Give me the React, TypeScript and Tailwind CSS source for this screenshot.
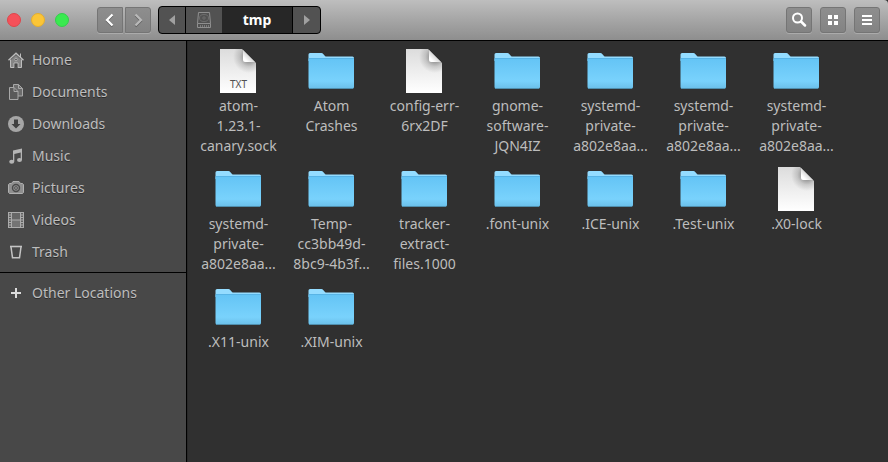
import React from "react";

type IconProps = { className?: string };

const gray = "#bdbdbd";

function HomeIcon() {
  return (
    <svg width="16" height="16" viewBox="0 0 16 16" fill="none">
      <path d="M2.500 8v7.500h11V8L8 3z" fill="#858585" />
      <path d="M.500 8.200 8 1.200l7.500 7" stroke={gray} strokeWidth="1.400" />
      <path d="M2.500 7.500v8h3.500v-4.500h4v4.500h3.500v-8M12.500 5V1.500" stroke={gray} />
      <path d="M6.500 11.500h3v4h-3z" fill="#484848" />
      <circle cx="8" cy="7.500" r="1.300" stroke={gray} strokeWidth=".8" fill="#555" />
    </svg>
  );
}

function DocumentsIcon() {
  return (
    <svg width="16" height="16" viewBox="0 0 16 16" fill="#6c6c6c" stroke="#a8a8a8">
      <path d="M5.500 3V.500h5l4 4v7.500h-5" />
      <path d="M10.500.500v4h4" fill="none" />
      <path d="M1.500 3.500h4.500l4 4v8H1.500z" fill="#5a5a5a" />
      <path d="M6 3.500v4h4" fill="none" />
    </svg>
  );
}

function DownloadsIcon() {
  return (
    <svg width="16" height="16" viewBox="0 0 16 16">
      <circle cx="8" cy="8" r="8" fill="#a6a6a6" />
      <path d="M6 3.500h4V8h2.500L8 12.500 3.500 8H6z" fill="#404040" />
    </svg>
  );
}

function MusicIcon() {
  return (
    <svg width="16" height="16" viewBox="0 0 16 16" fill="#b4b4b4">
      <path d="M5 2.500 14 .500V12h-1.300V4.500L6.300 6v7.500H5z" />
      <ellipse cx="3.700" cy="13.700" rx="2.500" ry="2" />
      <ellipse cx="11.500" cy="12" rx="2.500" ry="2" />
    </svg>
  );
}

function PicturesIcon() {
  return (
    <svg width="16" height="16" viewBox="0 0 16 16" stroke="#b0b0b0">
      <path d="M1.500 3.500h2L5 1.500h6l1.500 2h2l1 1v8l-1 1h-13l-1-1v-8z" fill="#8e8e8e" />
      <circle cx="8" cy="8" r="3.500" fill="#8e8e8e" stroke="#4a4a4a" strokeWidth="1.400" />
      <circle cx="8" cy="8" r="1.500" fill="#8e8e8e" stroke="#5a5a5a" />
    </svg>
  );
}

function VideosIcon() {
  return (
    <svg width="16" height="16" viewBox="0 0 16 16">
      <path d="M0 0h16v16H0z" fill="#ababab" />
      <path d="M4 1h8v6.500H4z" fill="#666" />
      <path d="M4 8.500h8V15H4z" fill="#747474" />
      <path d="M2 1v14M14 1v14" stroke="#4b4b4b" strokeWidth="1.500" strokeDasharray="1.500 1" />
    </svg>
  );
}

function TrashIcon() {
  return (
    <svg width="16" height="16" viewBox="0 0 16 16" fill="none" stroke="#c4c4c4">
      <path d="M2 2.500h12" strokeWidth="1.600" />
      <path d="M3 3 4.500 13.700h7L13 3" strokeWidth="1.500" />
    </svg>
  );
}

function PlusIcon() {
  return (
    <svg width="16" height="16" viewBox="0 0 16 16" stroke="#dcdcdc" strokeWidth="2">
      <path d="M3 8h10M8 3v10" />
    </svg>
  );
}

function DiskIcon() {
  return (
    <svg width="16" height="16" viewBox="0 0 16 16" fill="none" stroke="#8f8f8f">
      <path d="M2.500.500h11l1 11v4h-13v-4z" />
      <path d="M1.500 11.500h13" />
      <ellipse cx="8" cy="6" rx="4.500" ry="3.500" stroke="#6e6e6e" />
      <circle cx="8" cy="6" r="1.200" stroke="#6e6e6e" />
      <path d="M4.500 13v2M6.500 13v2M8.500 13v2M10.500 13v2M12.500 13v2" stroke="#7c7c7c" />
    </svg>
  );
}

function Chevron({ right = false }: { right?: boolean }) {
  return (
    <svg width="16" height="16" viewBox="0 0 16 16" fill="none" stroke="currentColor" strokeWidth="2.200" className="drop-shadow-[0_1px_0_rgba(0,0,0,0.3)]">
      <path d={right ? "M5.500 2.500 11 8l-5.500 5.500" : "M10.500 2.500 5 8l5.500 5.500"} />
    </svg>
  );
}

function Triangle({ right = false }: { right?: boolean }) {
  return (
    <svg width="6" height="10" viewBox="0 0 6 10" fill="#a0a0a0">
      <path d={right ? "M0 0v10l6-5z" : "M6 0v10L0 5z"} />
    </svg>
  );
}

function SearchIcon() {
  return (
    <svg width="16" height="16" viewBox="0 0 16 16" fill="none" stroke="#fff">
      <circle cx="6.500" cy="6" r="4.500" strokeWidth="2" />
      <path d="m10 9.500 4 4" strokeWidth="2.500" strokeLinecap="round" />
    </svg>
  );
}

function GridIcon() {
  return (
    <svg width="16" height="16" viewBox="0 0 16 16" fill="#fff">
      <path d="M3 3h4v4H3zM9 3h4v4H9zM3 9h4v4H3zM9 9h4v4H9z" />
    </svg>
  );
}

function MenuIcon() {
  return (
    <svg width="16" height="16" viewBox="0 0 16 16" fill="#fff">
      <path d="M3 3h10v2H3zM3 7h10v2H3zM3 11h10v2H3z" />
    </svg>
  );
}

function FolderIcon() {
  return (
    <svg width="47" height="48" viewBox="0 0 47 48">
      <defs>
        <linearGradient id="folder" x1="0" y1="0" x2="0" y2="1">
          <stop offset="0" stopColor="#64c4f5" />
          <stop offset=".75" stopColor="#79d2fc" />
          <stop offset="1" stopColor="#6bc0ea" />
        </linearGradient>
      </defs>
      <path d="M.500 8V6.500Q.500 5 2 5h11.500q1 0 1.500.700l2 2.300q.500.500 1.500.500h26q1.500 0 1.500 1.500V13H.500z" fill="#94dcff" />
      <path d="M.500 10.500h45.500V39q0 1.500-1.500 1.500H2Q.500 40.500.500 39z" fill="url(#folder)" />
      <path d="M1 10.500h45" stroke="#58b4e6" />
      <path d="M1 40.500h44" stroke="#4f8fae" />
    </svg>
  );
}

function FileIcon({ kind }: { kind: string }) {
  return (
    <span className="relative block">
      <svg width="47" height="48" viewBox="0 0 47 48">
        <defs>
          <linearGradient id="paper" x1="0" y1="0" x2="0" y2="1">
            <stop offset="0" stopColor="#dcdcdc" />
            <stop offset="1" stopColor="#fff" />
          </linearGradient>
          <linearGradient id="fold" x1="0" y1="1" x2="1" y2="0">
            <stop offset=".2" stopColor="#fff" />
            <stop offset=".5" stopColor="#d8d8d8" />
          </linearGradient>
          <radialGradient id="shade" cx="34" cy="9" r="16" gradientUnits="userSpaceOnUse">
            <stop offset=".2" stopColor="#000" stopOpacity=".4" />
            <stop offset=".6" stopColor="#000" stopOpacity=".14" />
            <stop offset="1" stopColor="#000" stopOpacity="0" />
          </radialGradient>
        </defs>
        <path d="M5 1h22l14 14v30H5z" fill="url(#paper)" />
        <path d="M5 1h22l14 14v30H5z" fill="url(#shade)" />
        <path d="M28 2v10q0 2 2 2h10z" fill="url(#fold)" />
      </svg>
      {kind === "txt" && (
        <span className="absolute inset-x-0 bottom-1 text-center text-[10px] leading-4 text-[#505050]">TXT</span>
      )}
    </span>
  );
}

const places: { name: string; Icon: React.ComponentType<IconProps> }[] = [
  { name: "Home", Icon: HomeIcon },
  { name: "Documents", Icon: DocumentsIcon },
  { name: "Downloads", Icon: DownloadsIcon },
  { name: "Music", Icon: MusicIcon },
  { name: "Pictures", Icon: PicturesIcon },
  { name: "Videos", Icon: VideosIcon },
  { name: "Trash", Icon: TrashIcon },
];

const systemd = ["systemd-", "private-", "a802e8aa..."];

const entries: { kind: string; lines: string[] }[] = [
  { kind: "txt", lines: ["atom-", "1.23.1-", "canary.sock"] },
  { kind: "folder", lines: ["Atom", "Crashes"] },
  { kind: "file", lines: ["config-err-", "6rx2DF"] },
  { kind: "folder", lines: ["gnome-", "software-", "JQN4IZ"] },
  { kind: "folder", lines: systemd },
  { kind: "folder", lines: systemd },
  { kind: "folder", lines: systemd },
  { kind: "folder", lines: systemd },
  { kind: "folder", lines: ["Temp-", "cc3bb49d-", "8bc9-4b3f..."] },
  { kind: "folder", lines: ["tracker-", "extract-", "files.1000"] },
  { kind: "folder", lines: [".font-unix"] },
  { kind: "folder", lines: [".ICE-unix"] },
  { kind: "folder", lines: [".Test-unix"] },
  { kind: "file", lines: [".X0-lock"] },
  { kind: "folder", lines: [".X11-unix"] },
  { kind: "folder", lines: [".XIM-unix"] },
];

function ToolButton({ label, className = "rounded-[3px]", children }: { label: string; className?: string; children: React.ReactNode }) {
  return (
    <button
      type="button"
      aria-label={label}
      className={`flex size-[26px] items-center justify-center border border-[#757575] bg-linear-to-b from-[#8e8e8e] to-[#838383] shadow-[0_1px_0_rgba(255,255,255,0.2)] ${className}`}
    >
      {children}
    </button>
  );
}

function PlaceRow({ name, Icon }: { name: string; Icon: React.ComponentType<IconProps> }) {
  return (
    <li>
      <button type="button" className="flex h-8 w-full items-center gap-2 px-2 text-left [text-shadow:0_1px_0_rgba(0,0,0,0.4)]">
        <Icon />
        {name}
      </button>
    </li>
  );
}

export default function App() {
  return (
    <div className="flex min-h-screen flex-col bg-[#303030] font-['Noto_Sans',sans-serif] text-[14px] leading-5 text-[#bdbdbd]">
      <header className="flex h-[41px] items-center justify-between rounded-tr-[4px] border-b border-black bg-linear-to-b from-[#bebebe] to-[#8e8e8e] px-2">
        <div className="flex items-center">
          <div className="-ml-px flex gap-[10px]">
            <button type="button" aria-label="Close" className="size-[14px] rounded-full border border-[#e0454a] bg-[#f5515a]" />
            <button type="button" aria-label="Minimize" className="size-[14px] rounded-full border border-[#e5ae2e] bg-[#fbc537]" />
            <button type="button" aria-label="Maximize" className="size-[14px] rounded-full border border-[#32d04a] bg-[#3aea50]" />
          </div>
          <div className="ml-7 flex gap-[2px]">
            <ToolButton label="Back" className="rounded-l-[3px] text-white">
              <Chevron />
            </ToolButton>
            <ToolButton label="Forward" className="rounded-r-[3px] text-[#b9b9b9]">
              <Chevron right />
            </ToolButton>
          </div>
          <nav aria-label="Path" className="ml-[7px] flex h-7 overflow-hidden rounded-[4px] border border-black bg-[#525252]">
            <button type="button" aria-label="Scroll path left" className="flex w-[27px] items-center justify-center border-r border-black">
              <Triangle />
            </button>
            <button type="button" aria-label="File system" className="flex w-9 items-center justify-center">
              <DiskIcon />
            </button>
            <button type="button" aria-current="page" className="w-[70px] bg-[#272727] text-center font-bold text-white">
              tmp
            </button>
            <button type="button" aria-label="Scroll path right" className="flex w-7 items-center justify-center border-l border-black">
              <Triangle right />
            </button>
          </nav>
        </div>
        <div className="flex gap-2">
          <ToolButton label="Search"><SearchIcon /></ToolButton>
          <ToolButton label="View"><GridIcon /></ToolButton>
          <ToolButton label="Menu"><MenuIcon /></ToolButton>
        </div>
      </header>
      <div className="flex flex-1">
        <aside className="w-[187px] shrink-0 border-r border-black bg-[#484848]">
          <ul className="border-b border-black pt-[3px] pb-1">
            {places.map((p) => (
              <PlaceRow key={p.name} name={p.name} Icon={p.Icon} />
            ))}
          </ul>
          <ul className="pt-1">
            <PlaceRow name="Other Locations" Icon={PlusIcon} />
          </ul>
        </aside>
        <main className="flex-1 border-l border-[#292929] px-1 pt-[7px]">
          <ul className="grid grid-cols-[repeat(auto-fill,93px)] gap-y-[10px]">
            {entries.map((e, i) => (
              <li key={i} className="flex min-h-[108px] flex-col items-center">
                {e.kind === "folder" ? <FolderIcon /> : <FileIcon kind={e.kind} />}
                <p className="text-center">
                  {e.lines.map((line) => (
                    <span key={line} className="block">{line}</span>
                  ))}
                </p>
              </li>
            ))}
          </ul>
        </main>
      </div>
    </div>
  );
}
